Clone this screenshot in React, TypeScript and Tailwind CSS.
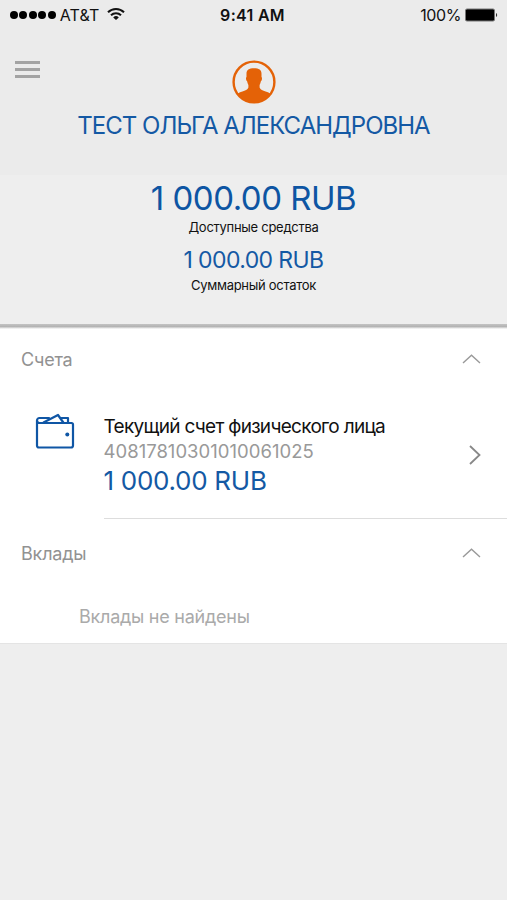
import type { ReactNode } from "react";

const account = {
  name: "Текущий счет физического лица",
  number: "40817810301010061025",
  balance: "1 000.00 RUB",
};

function StatusBar() {
  return (
    <div className="grid h-[30px] grid-cols-3 items-center text-[#111]">
      <div className="flex items-center pl-[10px]">
        <div className="flex gap-[1.7px]">
          {[1, 2, 3, 4, 5].map((dot) => (
            <span key={dot} className="h-[7.8px] w-[7.8px] shrink-0 rounded-full bg-black" />
          ))}
        </div>
        <span className="ml-[4px] text-[16px] leading-[30px] tracking-[0.1px]">AT&T</span>
        <svg className="ml-[8px] -mt-[2px]" width="18" height="14" viewBox="0 0 18 14" fill="none" stroke="#111" strokeWidth="2">
          <path d="M1 5.2a11.3 11.3 0 0 1 16 0" />
          <path d="M4 8.3a7 7 0 0 1 10 0" />
          <path d="M9 13 6.2 10.4a4 4 0 0 1 5.6 0z" fill="#111" stroke="none" />
        </svg>
      </div>
      <span className="pr-[2px] text-center text-[16px] font-semibold leading-[30px] tracking-[0.3px]">9:41 AM</span>
      <div className="flex items-center justify-end pr-[9px]">
        <span className="mr-[4px] text-[16px] leading-[30px] tracking-[-0.4px]">100%</span>
        <svg width="33" height="14" viewBox="0 0 33 14">
          <rect x="0.5" y="1" width="29" height="12" rx="1.5" fill="#000" stroke="#777" />
          <path d="M31 5a2.3 2.3 0 0 1 0 4z" fill="#333" />
        </svg>
      </div>
    </div>
  );
}

function Avatar() {
  return (
    <svg width="44" height="44" viewBox="0 0 44 44">
      <circle cx="22" cy="22" r="20.4" fill="none" stroke="#e46207" strokeWidth="2.4" />
      <path
        d="M14.500 13.500C14.500 10 17 8.300 22 8.300S29.500 10 29.500 13.500V17c.9.700.5 3.700-.6 4.300-.3 1.500-.7 2.700-1.300 3.700v2.600c.8 2.200 3.200 3 6 3.900 2.200.7 3.900 1.400 5 2.500C34.500 39.500 29 43 22 43S9.500 39.500 5.400 34c1.100-1.100 2.800-1.800 5-2.500 2.800-.9 5.200-1.700 6-3.900V25c-.6-1-1-2.200-1.300-3.700-1.100-.6-1.500-3.600-.6-4.300z"
        fill="#e46207"
      />
    </svg>
  );
}

function WalletIcon() {
  return (
    <svg width="40" height="38" viewBox="0 0 40 38" fill="none" stroke="#0f56a5" strokeWidth="2.2" strokeLinejoin="round" strokeLinecap="round">
      <path d="M2 7.500v25a2 2 0 0 0 2 2H36a2 2 0 0 0 2-2V11.500A1.500 1.500 0 0 0 36.500 10H4.500A2.500 2.500 0 0 1 2 7.500 2.500 2.500 0 0 1 4.500 5H14" />
      <path d="M8.500 9.500 23 2 28.300 9.500" />
      <path d="M26.500 5H33V9.500" />
      <circle cx="32.300" cy="21.500" r="2" fill="#0f56a5" stroke="none" />
    </svg>
  );
}

function Section({ title, children }: { title: string; children: ReactNode }) {
  return (
    <section>
      <div className="flex h-[70px] items-center justify-between pl-[21px] pr-[26px]">
        <h2 className="text-[18px] leading-[24px] tracking-[-0.2px] text-[#929292]">{title}</h2>
        <svg className="-mt-[3px]" width="19" height="10" viewBox="0 0 19 10" fill="none" stroke="#999" strokeWidth="1.400">
          <path d="M1 9 9.500 1.200 18 9" />
        </svg>
      </div>
      {children}
    </section>
  );
}

export default function App() {
  return (
    <div className="h-[900px] w-[507px] overflow-hidden bg-[#eee] font-['Inter',sans-serif]">
      {/* Header */}
      <header className="h-[175px] bg-[#ebebeb]">
        <StatusBar />
        <div className="grid grid-cols-3 items-start pt-[30px]">
          <div className="flex flex-col gap-[4px] pl-[15.400px] pt-[1.400px]">
            <span className="h-[3px] w-[25px] bg-[#a3a3a3]" />
            <span className="h-[3px] w-[25px] bg-[#a3a3a3]" />
            <span className="h-[3px] w-[25px] bg-[#a3a3a3]" />
          </div>
          <div className="flex justify-center">
            <Avatar />
          </div>
        </div>
        <h1 className="mt-[7px] whitespace-nowrap text-center text-[24px] leading-[30px] tracking-[-0.98px] text-[#1459a4]">
          ТЕСТ ОЛЬГА АЛЕКСАНДРОВНА
        </h1>
      </header>

      {/* Balance */}
      <div className="h-[149px] pt-[3px] text-center">
        <p className="text-[33px] leading-[40px] tracking-[-0.5px] text-[#0d55a3]">1 000.00 RUB</p>
        <p className="text-[13px] leading-[18px] tracking-[-0.28px] text-[#111]">Доступные средства</p>
        <p className="mt-[8px] text-[23px] leading-[32px] tracking-[-0.6px] text-[#1459a4]">1 000.00 RUB</p>
        <p className="text-[13px] leading-[18px] tracking-[-0.3px] text-[#111]">Суммарный остаток</p>
      </div>

      <main className="h-[320px] border-b border-[#e4e4e4] bg-white">
        <div className="h-[5px] bg-linear-to-b from-[#c4c4c4] via-[#b4b4b4] to-white" />
        <div className="-mt-[4px]">
          <Section title="Счета">
            <div className="flex h-[124px] pl-[34.500px]">
              <div className="w-[69px] pt-[18px]">
                <WalletIcon />
              </div>
              <div className="flex flex-1 border-b border-[#ddd] pt-[20px]">
                <div className="flex-1 whitespace-nowrap">
                  <p className="text-[19px] leading-[24px] tracking-[-0.7px] text-[#111]">{account.name}</p>
                  <p className="text-[18.500px] leading-[24px] tracking-[0.02px] text-[#999]">{account.number}</p>
                  <p className="text-[26px] leading-[35px] tracking-[-0.28px] text-[#1459a4]">{account.balance}</p>
                </div>
                <svg className="mr-[26px] mt-[30px]" width="13" height="20" viewBox="0 0 13 20" fill="none" stroke="#888" strokeWidth="1.800">
                  <path d="M2 1 11.500 10 2 19" />
                </svg>
              </div>
            </div>
          </Section>
          <Section title="Вклады">
            <p className="pl-[79px] pt-[16px] text-[18px] leading-[24px] tracking-[-0.25px] text-[#aaa]">Вклады не найдены</p>
          </Section>
        </div>
      </main>
    </div>
  );
}
